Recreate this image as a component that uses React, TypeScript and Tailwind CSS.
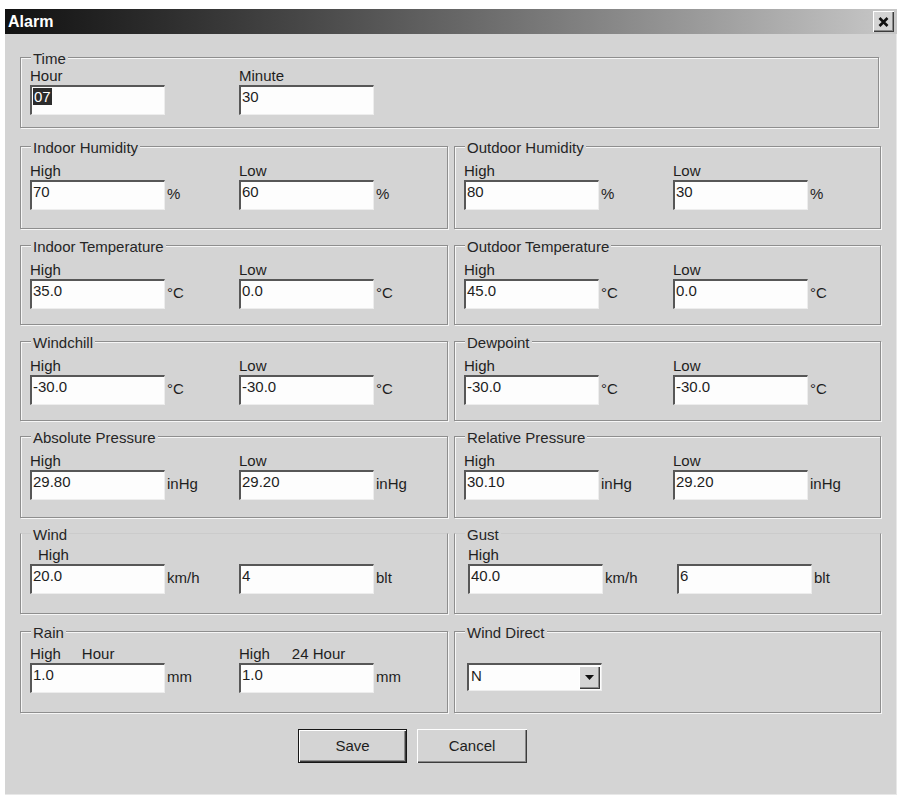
import React from "react";

// raised 3d bevel used by buttons and the little combo / close buttons
const raised =
  "bg-[#d4d4d4] shadow-[inset_1px_1px_0_#ffffff,inset_-1px_-1px_0_#3c3c3c,inset_-2px_-2px_0_#8a8a8a]";

// sunken white edit box
const sunken =
  "bg-[#fdfdfd] border-t-2 border-l-2 border-r border-b border-t-[#575757] border-l-[#575757] border-r-[#ededed] border-b-[#ededed]";

function Field({ value, selected }: { value: string; selected?: boolean }) {
  return (
    <div className={`h-[30px] w-[135px] shrink-0 pl-[1px] pt-[1px] leading-[17px] ${sunken}`}>
      {selected ? <span className="bg-[#2c2c2c] px-[1px] text-white">{value}</span> : value}
    </div>
  );
}

type ColProps = {
  label?: React.ReactNode;
  value: string;
  unit?: string;
  selected?: boolean;
  labelClass?: string;
};

function Col({ label, value, unit, selected, labelClass = "" }: ColProps) {
  return (
    <div className="flex w-[209px] shrink-0 flex-col">
      <div className={`h-[17px] leading-[17px] ${labelClass}`}>{label}</div>
      <div className="mt-[1px] flex">
        <Field value={value} selected={selected} />
        {unit && <span className="ml-[2px] self-end pb-[8px] leading-[17px]">{unit}</span>}
      </div>
    </div>
  );
}

type GroupProps = {
  title: string;
  className?: string;
  contentClass?: string;
  faint?: boolean;
  children?: React.ReactNode;
};

// etched group box; the caption sits over the top line like a legend
function Group({ title, className = "", contentClass = "", faint, children }: GroupProps) {
  const edge = faint
    ? "border-[#8e8e8e] border-t-[#cbcbcb] shadow-[inset_1px_0_0_#f6f6f6,1px_1px_0_#f6f6f6]"
    : "border-[#8e8e8e] shadow-[inset_1px_1px_0_#f6f6f6,1px_1px_0_#f6f6f6]";
  return (
    <div className={`border ${edge} ${className}`}>
      <div className="-mt-[8px] ml-[10px] w-fit bg-[#d4d4d4] px-[2px] leading-[17px] text-[#262626]">
        {title}
      </div>
      <div className={contentClass}>{children}</div>
    </div>
  );
}

function PairGroup({
  title,
  unit,
  high,
  low,
  className = "",
}: {
  title: string;
  unit: string;
  high: string;
  low: string;
  className?: string;
}) {
  return (
    <Group title={title} className={className} contentClass="mt-[6px] flex pl-[9px]">
      <Col label="High" value={high} unit={unit} />
      <Col label="Low" value={low} unit={unit} />
    </Group>
  );
}

export default function App() {
  return (
    <div className="min-h-[798px] w-[900px] bg-white pl-[5px] pt-[9px] font-['Liberation_Sans',Arial,sans-serif] text-[15px] text-[#1e1e1e]">
      <div className="flex h-[786px] w-[892px] flex-col bg-[#d4d4d4] shadow-[inset_-1px_-1px_0_#e8e8e8]">
        {/* title bar */}
        <div className="flex h-[25px] items-center justify-between bg-linear-to-r from-[#121212] to-[#c8c8c8] px-[3px]">
          <span className="text-[16px] font-bold text-white">Alarm</span>
          <div className={`flex h-[21px] w-[21px] items-center justify-center ${raised}`}>
            <svg width="11" height="10" viewBox="0 0 11 10">
              <path d="M1.5 1 L9.5 9 M9.5 1 L1.5 9" stroke="#111" strokeWidth="2.6" />
            </svg>
          </div>
        </div>

        <div className="flex flex-col px-[15px]">
          <Group title="Time" className="mt-[23px] h-[71px] w-[859px]" contentClass="flex pl-[9px]">
            <Col label="Hour" value="07" selected />
            <Col label="Minute" value="30" />
          </Group>

          <div className="mt-[18px] grid grid-cols-[428px_427px] gap-x-[6px]">
            <PairGroup className="h-[83px]" title="Indoor Humidity" unit="%" high="70" low="60" />
            <PairGroup className="h-[83px]" title="Outdoor Humidity" unit="%" high="80" low="30" />
          </div>

          <div className="mt-[16px] grid grid-cols-[428px_427px] gap-x-[6px]">
            <PairGroup className="h-[80px]" title="Indoor Temperature" unit="°C" high="35.0" low="0.0" />
            <PairGroup className="h-[80px]" title="Outdoor Temperature" unit="°C" high="45.0" low="0.0" />
          </div>

          <div className="mt-[16px] grid grid-cols-[428px_427px] gap-x-[6px]">
            <PairGroup className="h-[80px]" title="Windchill" unit="°C" high="-30.0" low="-30.0" />
            <PairGroup className="h-[80px]" title="Dewpoint" unit="°C" high="-30.0" low="-30.0" />
          </div>

          <div className="mt-[15px] grid grid-cols-[428px_427px] gap-x-[6px]">
            <PairGroup className="h-[82px]" title="Absolute Pressure" unit="inHg" high="29.80" low="29.20" />
            <PairGroup className="h-[82px]" title="Relative Pressure" unit="inHg" high="30.10" low="29.20" />
          </div>

          <div className="mt-[15px] grid grid-cols-[428px_427px] gap-x-[6px]">
            <Group title="Wind" faint className="h-[81px]" contentClass="mt-[3px] flex pl-[9px]">
              <Col label="High" labelClass="pl-[8px]" value="20.0" unit="km/h" />
              <Col value="4" unit="blt" />
            </Group>
            <Group title="Gust" faint className="h-[81px]" contentClass="mt-[3px] flex pl-[13px]">
              <Col label="High" value="40.0" unit="km/h" />
              <Col value="6" unit="blt" />
            </Group>
          </div>

          <div className="mt-[17px] grid grid-cols-[428px_427px] gap-x-[6px]">
            <Group title="Rain" className="h-[82px]" contentClass="mt-[4px] flex pl-[9px]">
              <Col
                label={
                  <>
                    <span>High</span>
                    <span className="ml-[21px]">Hour</span>
                  </>
                }
                value="1.0"
                unit="mm"
              />
              <Col
                label={
                  <>
                    <span>High</span>
                    <span className="ml-[22px]">24 Hour</span>
                  </>
                }
                value="1.0"
                unit="mm"
              />
            </Group>
            <Group title="Wind Direct" className="h-[82px]" contentClass="ml-[12px] mt-[22px]">
              <div className={`flex h-[28px] w-[135px] ${sunken}`}>
                <div className="flex-1 pl-[2px] pt-[2px] leading-[17px]">N</div>
                <div className={`my-[1px] mr-[1px] flex w-[21px] items-center justify-center ${raised}`}>
                  <svg width="9" height="5" viewBox="0 0 9 5">
                    <path d="M0 0 H9 L4.5 5 Z" fill="#111" />
                  </svg>
                </div>
              </div>
            </Group>
          </div>

          <div className="mt-[16px] flex pl-[278px]">
            <button className={`h-[34px] w-[109px] border border-[#161616] ${raised}`}>Save</button>
            <button className={`ml-[10px] h-[34px] w-[110px] ${raised}`}>Cancel</button>
          </div>
        </div>
      </div>
    </div>
  );
}
